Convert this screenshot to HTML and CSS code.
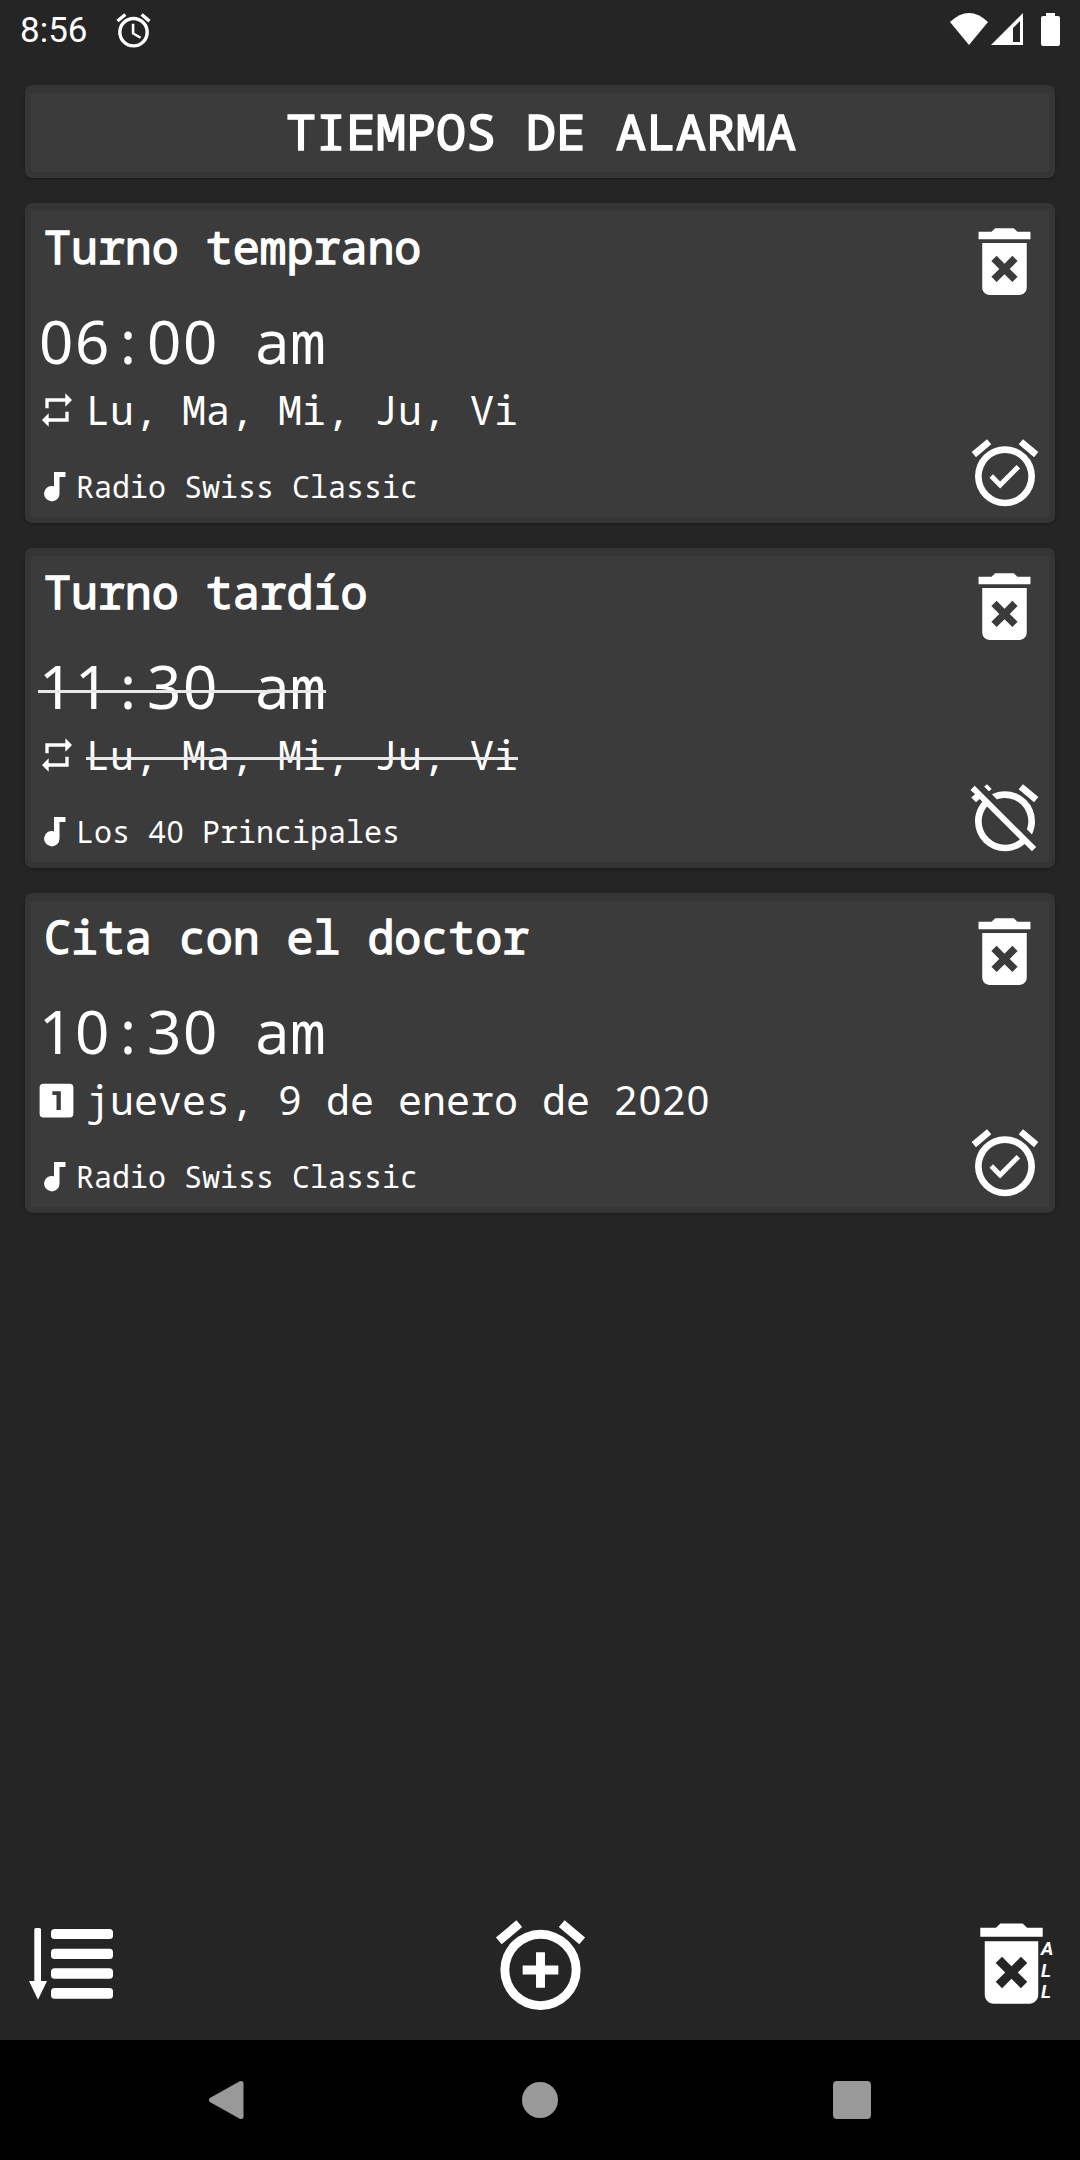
FILE: index.html
```html
<!DOCTYPE html>
<html lang="es">
<head>
    <meta charset="UTF-8">
    <meta name="viewport" content="width=device-width, initial-scale=1.0">
    <meta name="theme-color" content="#252525">
    <title>Tiempos de alarma</title>
    <link rel="stylesheet" href="styles.css">
</head>
<body>
    <!-- Shared icons -->
    <svg class="icon-defs" width="0" height="0">
        <symbol id="icon-trash" viewBox="0 0 24 24">
            <path d="M6 19c0 1.1.9 2 2 2h8c1.1 0 2-.9 2-2V7H6v12zm2.46-7.12l1.41-1.41L12 12.59l2.12-2.12 1.41 1.41L13.41 14l2.12 2.12-1.41 1.41L12 15.41l-2.12 2.12-1.41-1.41L10.59 14l-2.13-2.12zM15.5 4l-1-1h-5l-1 1H5v2h14V4z"/>
        </symbol>
        <symbol id="icon-clock" viewBox="0 0 24 24">
            <path d="M12,20A7,7 0 0,1 5,13A7,7 0 0,1 12,6A7,7 0 0,1 19,13A7,7 0 0,1 12,20M12,4A9,9 0 0,0 3,13A9,9 0 0,0 12,22A9,9 0 0,0 21,13A9,9 0 0,0 12,4M7.88,3.39L6.6,1.86L2,5.71L3.29,7.24L7.88,3.39M22,5.72L17.4,1.86L16.11,3.39L20.71,7.25L22,5.72Z"/>
        </symbol>
        <symbol id="icon-alarm-on" viewBox="0 0 24 24">
            <use href="#icon-clock"/>
            <path d="M10.54,14.53L8.41,12.4L7.35,13.46L10.53,16.64L16.53,10.64L15.47,9.58L10.54,14.53Z"/>
        </symbol>
        <symbol id="icon-alarm-off" viewBox="0 0 24 24">
            <path d="M8,3.28L6.6,1.86L5.74,2.57L7.16,4M16.47,18.39C15.26,19.39 13.7,20 12,20A7,7 0 0,1 5,13C5,11.3 5.61,9.74 6.61,8.53M2.92,2.29L1.65,3.57L3,4.9L1.87,5.83L3.29,7.25L4.4,6.31L5.2,7.11C3.83,8.69 3,10.75 3,13A9,9 0 0,0 12,22C14.25,22 16.31,21.17 17.89,19.8L20.09,22L21.35,20.73L3.89,3.27L2.92,2.29M22,5.72L17.4,1.86L16.11,3.39L20.71,7.25L22,5.72M12,6A7,7 0 0,1 19,13C19,13.84 18.84,14.65 18.57,15.4L20.09,16.92C20.67,15.73 21,14.4 21,13A9,9 0 0,0 12,4C10.6,4 9.27,4.33 8.07,4.91L9.59,6.43C10.35,6.16 11.16,6 12,6Z"/>
        </symbol>
        <symbol id="icon-repeat" viewBox="0 0 24 24">
            <path d="M17,17H7V14L3,18L7,22V19H19V13H17M7,7H17V10L21,6L17,2V5H5V11H7V7Z"/>
        </symbol>
        <symbol id="icon-once" viewBox="0 0 24 24">
            <path d="M14.3,17H12V9H9.8V7H14.3M19,3H5A2,2 0 0,0 3,5V19A2,2 0 0,0 5,21H19A2,2 0 0,0 21,19V5A2,2 0 0,0 19,3Z"/>
        </symbol>
        <symbol id="icon-note" viewBox="0 0 22 30">
            <path d="M10 0H21.5V5H15.5V21.5A7.7 7.7 0 1 1 10 14.3Z"/>
        </symbol>
    </svg>

    <header class="status-bar">
        <span class="status-time">8:56</span>
        <svg class="status-alarm" viewBox="0 0 24 24">
            <use href="#icon-clock"/>
            <path d="M12.5 8H11v6l4.75 2.85.75-1.23-4-2.37V8z"/>
        </svg>
        <svg class="status-icons" viewBox="0 0 112 34">
            <path d="M0 9Q19 -9 38 9L19 32Z"/>
            <path fill-rule="evenodd" d="M41 32L73 0V32ZM63 15V29H70V8Z"/>
            <path d="M96 0H105V3H108Q110 3 110 5V31Q110 33 108 33H93Q91 33 91 31V5Q91 3 93 3H96Z"/>
        </svg>
    </header>

    <main class="content">
        <h1 class="panel title">TIEMPOS DE ALARMA</h1>

        <section class="panel alarm">
            <div class="alarm-info">
                <h2 class="alarm-name">Turno temprano</h2>
                <div class="alarm-time"><span class="num">06</span>:<span class="num">00</span> am</div>
                <div class="alarm-days"><svg class="icon-days"><use href="#icon-repeat"/></svg><span>Lu, Ma, Mi, Ju, Vi</span></div>
                <div class="alarm-sound"><svg class="icon-sound"><use href="#icon-note"/></svg><span>Radio Swiss Classic</span></div>
            </div>
            <div class="alarm-actions">
                <svg class="icon-delete"><use href="#icon-trash"/></svg>
                <svg class="icon-toggle"><use href="#icon-alarm-on"/></svg>
            </div>
        </section>

        <section class="panel alarm">
            <div class="alarm-info">
                <h2 class="alarm-name">Turno tardío</h2>
                <div class="alarm-time"><span class="strike"><span class="num">11</span>:<span class="num">30</span> am</span></div>
                <div class="alarm-days"><svg class="icon-days"><use href="#icon-repeat"/></svg><span class="strike">Lu, Ma, Mi, Ju, Vi</span></div>
                <div class="alarm-sound"><svg class="icon-sound"><use href="#icon-note"/></svg><span>Los <span class="num">40</span> Principales</span></div>
            </div>
            <div class="alarm-actions">
                <svg class="icon-delete"><use href="#icon-trash"/></svg>
                <svg class="icon-toggle"><use href="#icon-alarm-off"/></svg>
            </div>
        </section>

        <section class="panel alarm">
            <div class="alarm-info">
                <h2 class="alarm-name">Cita con el doctor</h2>
                <div class="alarm-time"><span class="num">10</span>:<span class="num">30</span> am</div>
                <div class="alarm-days"><svg class="icon-days once"><use href="#icon-once"/></svg><span>jueves, <span class="num">9</span> de enero de <span class="num">2020</span></span></div>
                <div class="alarm-sound"><svg class="icon-sound"><use href="#icon-note"/></svg><span>Radio Swiss Classic</span></div>
            </div>
            <div class="alarm-actions">
                <svg class="icon-delete"><use href="#icon-trash"/></svg>
                <svg class="icon-toggle"><use href="#icon-alarm-on"/></svg>
            </div>
        </section>
    </main>

    <footer class="toolbar">
        <svg class="tool-sort" viewBox="0 0 84 72">
            <path d="M5.3 1.5Q5.3 0 6.8 0H10.5Q12 0 12 1.5V53H18L9 71.7L0 53H5.3Z"/>
            <rect x="22" y="1" width="62" height="10" rx="3.5"/>
            <rect x="22" y="20.7" width="62" height="10.3" rx="3.5"/>
            <rect x="22" y="40.3" width="62" height="10.5" rx="3.5"/>
            <rect x="22" y="60" width="62" height="10.7" rx="3.5"/>
        </svg>
        <svg class="tool-add" viewBox="0 0 24 24">
            <use href="#icon-clock"/>
            <path d="M13,9H11V12H8V14H11V17H13V14H16V12H13Z"/>
        </svg>
        <div class="tool-delete-all">
            <svg class="icon-delete-all"><use href="#icon-trash"/></svg>
            <div class="all-label"><span>A</span><span>L</span><span>L</span></div>
        </div>
    </footer>

    <nav class="nav-bar">
        <svg class="nav-back" viewBox="0 0 36 40"><path d="M3.5 20L33 3.5V36.5Z"/></svg>
        <div class="nav-home"></div>
        <div class="nav-recent"></div>
    </nav>
</body>
</html>
```
FILE: styles.css
```css
:root {
    --bg-color: #252525;
    --card-color: #3b3b3b;
    --card-edge: #353535;
    --text-color: #ffffff;
    --nav-color: #999999;
}

* {
    box-sizing: border-box;
    margin: 0;
    padding: 0;
}

body {
    width: 1080px;
    height: 2160px;
    display: flex;
    flex-direction: column;
    overflow: hidden;
    font-family: "Droid Sans Mono", "Noto Sans Mono", "DejaVu Sans Mono", monospace;
    color: var(--text-color);
    background-color: var(--bg-color);
}

svg {
    display: block;
    flex: none;
    fill: currentColor;
}

.icon-defs {
    position: absolute;
}

/* Status bar */
.status-bar {
    display: flex;
    align-items: flex-start;
    height: 63px;
    padding: 0 18px 0 20px;
    font-family: Roboto, sans-serif;
}

.status-time {
    width: 93px;
    font-size: 35px;
    line-height: 62px;
}

.status-alarm {
    width: 41px;
    height: 41px;
    margin-top: 10px;
}

.status-icons {
    width: 112px;
    height: 34px;
    margin: 13px 0 0 auto;
}

/* Cards */
.content {
    flex: 1;
    display: flex;
    flex-direction: column;
    gap: 25px;
    padding: 22px 25px 0;
}

.panel {
    border: 6px solid var(--card-edge);
    border-top-width: 8px;
    border-radius: 7px;
    background-color: var(--card-color);
    box-shadow: 0 1px 3px rgba(0, 0, 0, 0.35);
}

.title {
    height: 93px;
    padding-left: 2px;
    font-size: 50px;
    font-weight: normal;
    line-height: 77px;
    text-align: center;
    -webkit-text-stroke: 0.031em currentColor;
}

.alarm {
    display: flex;
    justify-content: space-between;
    height: 320px;
}

.alarm-info {
    padding: 6px 0 0 7px;
}

.alarm-name {
    padding-left: 6px;
    font-size: 45px;
    font-weight: normal;
    line-height: 60px;
    letter-spacing: -0.05px;
    -webkit-text-stroke: 0.031em currentColor;
}

.alarm-time {
    margin-top: 29px;
    font-size: 60px;
    line-height: 70px;
    white-space: pre;
}

.alarm-days {
    display: flex;
    align-items: center;
    margin: 9px 0 0 -1px;
    font-size: 40px;
    line-height: 50px;
}

.alarm-sound {
    display: flex;
    align-items: center;
    margin-top: 32px;
    font-size: 30px;
    line-height: 40px;
}

/* plain digits on the same pitch as the monospaced text */
.num {
    position: relative;
    left: 0.015em;
    font-family: "Noto Sans", sans-serif;
    line-height: 0;
    letter-spacing: 0.028em;
}

.strike {
    position: relative;
}

.strike::after {
    content: "";
    position: absolute;
    left: 0;
    right: 0;
    bottom: 0.5em;
    height: 3px;
    background-color: #e8e8e8;
}

.alarm-time .strike::after {
    bottom: 0.56em;
}

.icon-days {
    width: 40px;
    height: 40px;
    margin-right: 9px;
}

.icon-days.once {
    width: 45px;
    height: 45px;
    margin: 0 7px 0 -3px;
}

.icon-sound {
    width: 22px;
    height: 30px;
    margin: 0 10px 0 6px;
}

.alarm-actions {
    display: flex;
    flex-direction: column;
    justify-content: space-between;
    align-items: center;
    padding: 6px 0 4px;
}

.icon-delete {
    width: 89px;
    height: 89px;
}

.icon-toggle {
    width: 80px;
    height: 80px;
}

/* Bottom tools */
.toolbar {
    display: flex;
    justify-content: space-between;
    height: 130px;
    padding: 0 27px 0 29px;
}

.tool-sort {
    width: 84px;
    height: 72px;
    margin-top: 18px;
}

.tool-add {
    width: 107px;
    height: 107px;
    margin: 2px 0 0 10px;
}

.tool-delete-all {
    display: flex;
    width: 95px;
}

.icon-delete-all {
    width: 107px;
    height: 107px;
}

.all-label {
    display: flex;
    flex-direction: column;
    margin: 28px 0 0 -24px;
    font-family: Roboto, sans-serif;
    font-size: 19px;
    font-style: italic;
    font-weight: bold;
    line-height: 21.5px;
}

/* System navigation */
.nav-bar {
    display: flex;
    align-items: center;
    justify-content: space-between;
    height: 120px;
    padding: 0 209px 0 208px;
    color: var(--nav-color);
    background-color: #000;
}

.nav-back {
    width: 36px;
    height: 40px;
    stroke: currentColor;
    stroke-width: 5px;
    stroke-linejoin: round;
}

.nav-home {
    width: 36px;
    height: 36px;
    margin-left: 2px;
    border-radius: 50%;
    background-color: var(--nav-color);
}

.nav-recent {
    width: 38px;
    height: 38px;
    border-radius: 4px;
    background-color: var(--nav-color);
}
```
